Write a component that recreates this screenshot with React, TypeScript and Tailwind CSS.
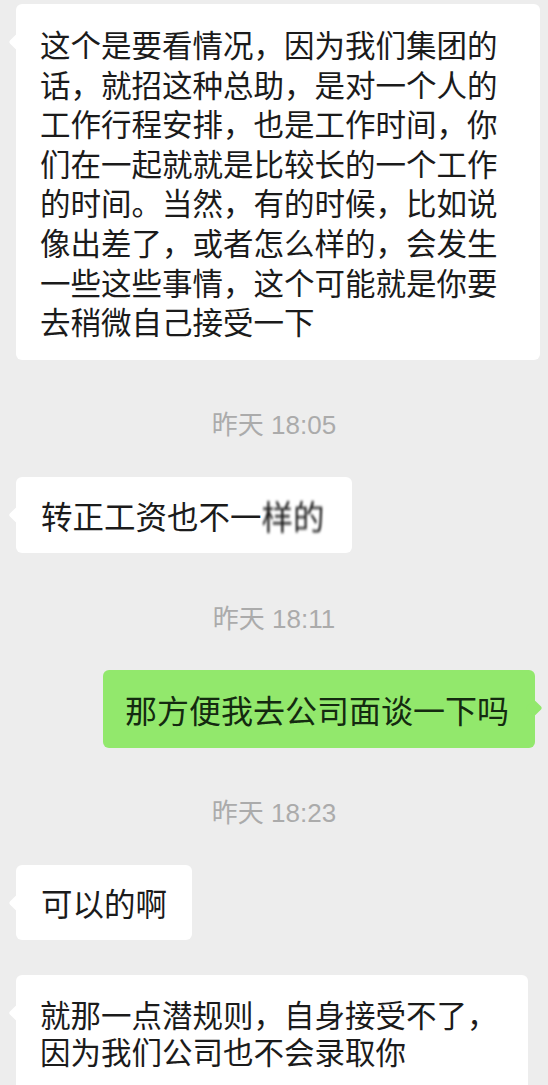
import React from "react";

const cjk = "font-['Noto_Sans_CJK_SC','Noto_Sans',sans-serif]";

function Tail({ side, color }: { side: "left" | "right"; color: string }) {
  return (
    <span
      className={`absolute top-[32px] w-[12px] h-[12px] rotate-45 rounded-[2px] ${color} ${
        side === "left" ? "left-[-5px]" : "right-[-5px]"
      }`}
    />
  );
}

function Stamp({ text, className }: { text: string; className: string }) {
  return (
    <div
      className={`h-[30px] flex items-center justify-center text-[26px] leading-[30px] text-[#ababab] font-['Liberation_Sans','Noto_Sans_CJK_SC',sans-serif] ${className}`}
    >
      {text}
    </div>
  );
}

export default function App() {
  const lines1 = [
    "这个是要看情况，因为我们集团的",
    "话，就招这种总助，是对一个人的",
    "工作行程安排，也是工作时间，你",
    "们在一起就就是比较长的一个工作",
    "的时间。当然，有的时候，比如说",
    "像出差了，或者怎么样的，会发生",
    "一些这些事情，这个可能就是你要",
    "去稍微自己接受一下",
  ];
  const lines5 = ["就那一点潜规则，自身接受不了，", "因为我们公司也不会录取你"];

  return (
    <div className={`w-[548px] h-[1085px] overflow-hidden bg-[#ededed] ${cjk} text-[#1b1b1b]`}>
      <div className="flex flex-col">
        {/* Bubble 1 */}
        <div className="mt-[4px] ml-[16px] relative w-[524px] bg-white rounded-[6px] pl-[24px] pt-[21px] pb-[18px]">
          <Tail side="left" color="bg-white" />
          <div className="relative text-[30.5px] leading-[39.6px] whitespace-nowrap">
            {lines1.map((l, i) => (
              <div key={i} className="h-[39.6px]">{l}</div>
            ))}
          </div>
        </div>

        <Stamp text="昨天 18:05" className="mt-[50px]" />

        {/* Bubble 2 */}
        <div className="mt-[37px] ml-[16px] relative w-[336px] h-[76px] bg-white rounded-[6px] pl-[25px] flex items-center">
          <Tail side="left" color="bg-white" />
          <div className="relative text-[31.5px] leading-[40px] whitespace-nowrap">
            转正工资也不一
            <span className="inline-block blur-[1.3px] scale-y-[1.1]">样的</span>
          </div>
        </div>

        <Stamp text="昨天 18:11" className="mt-[51px]" />

        {/* Green bubble */}
        <div className="mt-[36px] ml-[103px] relative w-[432px] h-[78px] bg-[#92e86c] rounded-[6px] pl-[22px] flex items-center">
          <Tail side="right" color="bg-[#92e86c]" />
          <div className="relative text-[32px] leading-[40px] whitespace-nowrap text-[#142a10]">
            那方便我去公司面谈一下吗
          </div>
        </div>

        <Stamp text="昨天 18:23" className="mt-[50px]" />

        {/* Bubble 4 */}
        <div className="mt-[37px] ml-[16px] relative w-[176px] h-[75px] bg-white rounded-[6px] pl-[25px] flex items-center">
          <Tail side="left" color="bg-white" />
          <div className="relative text-[31.5px] leading-[40px] whitespace-nowrap">可以的啊</div>
        </div>

        {/* Bubble 5 */}
        <div className="mt-[35px] ml-[16px] relative w-[512px] bg-white rounded-[6px] pl-[24px] pt-[21px] pb-[22px]">
          <Tail side="left" color="bg-white" />
          <div className="relative text-[30.5px] leading-[37px] whitespace-nowrap">
            {lines5.map((l, i) => (
              <div key={i} className="h-[37px]">{l}</div>
            ))}
          </div>
        </div>
      </div>
    </div>
  );
}
